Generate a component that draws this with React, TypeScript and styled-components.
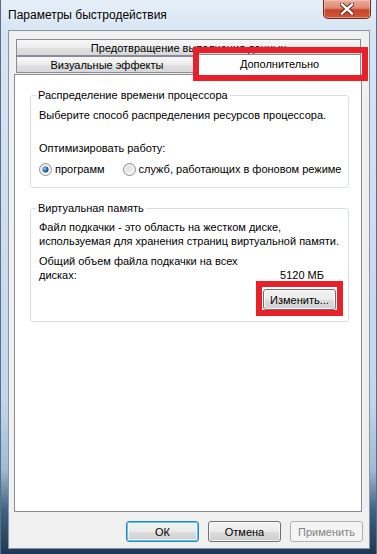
import { ReactNode } from "react";
import styled, { createGlobalStyle } from "styled-components";

//#region --- Page styles ---
const GlobalStyle = createGlobalStyle`
  html, body {
    margin: 0;
    padding: 0;
    background: #ffffff;
  }
  body {
    font-family: "Liberation Sans", "Noto Sans", "DejaVu Sans", sans-serif;
    font-size: 11px;
    color: #000000;
  }
`;

const Window = styled.div`
  position: relative;
  box-sizing: border-box;
  width: 377px;
  height: 554px;
  display: flex;
  flex-direction: column;
  border-left: 1px solid #5a6e85;
  border-right: 1px solid #5a6e85;
  background: linear-gradient(
    180deg,
    #e6eff8 0px,
    #d7e5f3 30px,
    #cddff0 200px,
    #c2d7ec 400px,
    #9fbad3 470px,
    #3f6283 510px,
    #1d3854 554px
  );
`;

const TitleBar = styled.div`
  height: 30px;
  display: flex;
  align-items: flex-start;
  justify-content: space-between;
  padding-left: 7px;
  flex-shrink: 0;
`;

const Title = styled.span`
  line-height: 30px;
  font-size: 12px;
  color: #000000;
  text-shadow: 0 0 6px rgba(255, 255, 255, 0.9);
`;

const CloseButton = styled.div`
  box-sizing: border-box;
  width: 48px;
  height: 19px;
  margin-right: 5px;
  display: flex;
  align-items: center;
  justify-content: center;
  border: 1px solid #6b2a1f;
  border-top: none;
  border-radius: 0 0 5px 5px;
  background: linear-gradient(
    180deg,
    #e9ab9a 0%,
    #de8a74 45%,
    #c8452b 55%,
    #d2553a 100%
  );
  box-shadow: inset 0 0 0 1px rgba(255, 220, 210, 0.45);
`;

const Client = styled.div`
  flex: 1;
  display: flex;
  flex-direction: column;
  margin: 0 6px 5px 7px;
  padding: 8px 7px 6px 5px;
  border: 1px solid #8796a8;
  background: #f0f0f0;
`;

const TabStrip = styled.div`
  display: flex;
  flex-direction: column;
`;

const TabRow = styled.div`
  display: flex;
  padding: 0 1px 0 2px;
`;

const Tab = styled.div<{ $width?: number; $selected?: boolean }>`
  position: relative;
  box-sizing: border-box;
  ${(p) => (p.$width ? `width: ${p.$width}px;` : "flex: 1;")}
  height: ${(p) => (p.$selected ? 21 : 17)}px;
  margin-top: ${(p) => (p.$selected ? -2 : 0)}px;
  margin-bottom: ${(p) => (p.$selected ? -1 : 0)}px;
  z-index: ${(p) => (p.$selected ? 2 : 1)};
  display: flex;
  align-items: center;
  justify-content: center;
  padding-bottom: ${(p) => (p.$selected ? 2 : 0)}px;
  border: 1px solid #898c95;
  border-bottom: ${(p) => (p.$selected ? "none" : "1px solid #898c95")};
  background: ${(p) =>
    p.$selected
      ? "#ffffff"
      : "linear-gradient(180deg, #f7f7f7 0%, #ededed 50%, #e0e0e0 51%, #d8d8d8 100%)"};
  white-space: nowrap;
`;

const Pane = styled.div`
  flex: 1;
  display: flex;
  flex-direction: column;
  gap: 13px;
  padding: 13px 12px 0 15px;
  border: 1px solid #898c95;
  background: #ffffff;
`;

const Group = styled.fieldset`
  margin: 0;
  padding: 0 12px 11px 8px;
  border: 1px solid #d5dfe5;
  border-radius: 3px;
  min-width: 0;
`;

const Legend = styled.legend`
  padding: 0 2px;
  margin-left: -3px;
  line-height: 15px;
`;

const Line = styled.div<{ $gap?: number }>`
  line-height: 14px;
  white-space: nowrap;
  margin-top: ${(p) => p.$gap ?? 0}px;
`;

const ValueRow = styled.div`
  display: flex;
  align-items: flex-end;
  justify-content: space-between;
  line-height: 14px;
  margin-top: 6px;
`;

const Value = styled.span`
  margin-right: 12px;
  white-space: nowrap;
`;

const RadioRow = styled.div`
  display: flex;
  align-items: center;
  gap: 18px;
  margin-top: 7px;
  line-height: 14px;
  white-space: nowrap;
`;

const RadioLabel = styled.label`
  display: flex;
  align-items: center;
  gap: 3px;
`;

const RightAlign = styled.div`
  display: flex;
  justify-content: flex-end;
  margin-top: 7px;
`;

const Marked = styled.div`
  position: relative;
  display: flex;
`;

const RedFrame = styled.div<{ $t: number; $r: number; $b: number; $l: number }>`
  position: absolute;
  top: ${(p) => -p.$t}px;
  right: ${(p) => -p.$r}px;
  bottom: ${(p) => -p.$b}px;
  left: ${(p) => -p.$l}px;
  border: 6px solid #e8202a;
  pointer-events: none;
  z-index: 5;
`;

const Button = styled.div<{ $default?: boolean; $disabled?: boolean }>`
  box-sizing: border-box;
  width: 73px;
  height: 21px;
  display: flex;
  align-items: center;
  justify-content: center;
  border-radius: 3px;
  border: 1px solid
    ${(p) => (p.$disabled ? "#adb2b5" : p.$default ? "#3c7fb1" : "#707070")};
  background: ${(p) =>
    p.$disabled
      ? "#f4f4f4"
      : "linear-gradient(180deg, #f2f2f2 0%, #ebebeb 50%, #dddddd 51%, #cfcfcf 100%)"};
  box-shadow: ${(p) =>
    p.$default
      ? "inset 0 0 0 1px #48d0f8, inset 0 0 0 2px rgba(255,255,255,0.6)"
      : p.$disabled
      ? "none"
      : "inset 0 0 0 1px rgba(255,255,255,0.7)"};
  color: ${(p) => (p.$disabled ? "#838383" : "#000000")};
`;

const ButtonRow = styled.div`
  display: flex;
  justify-content: flex-end;
  gap: 9px;
  margin-top: 9px;
  margin-right: -1px;
`;
//#endregion

const Radio = ({ checked }: { checked?: boolean }) => (
  <svg width="13" height="13" viewBox="0 0 13 13">
    <defs>
      <linearGradient id="rb" x1="0" y1="0" x2="1" y2="1">
        <stop offset="0" stopColor="#d9dada" />
        <stop offset="1" stopColor="#f6f6f6" />
      </linearGradient>
      <radialGradient id="rd" cx="0.35" cy="0.35" r="0.7">
        <stop offset="0" stopColor="#8ec4f2" />
        <stop offset="0.6" stopColor="#2a6fb8" />
        <stop offset="1" stopColor="#0d3f76" />
      </radialGradient>
    </defs>
    <circle cx="6.5" cy="6.5" r="6" fill="url(#rb)" stroke="#8e8f8f" />
    <circle cx="6.5" cy="6.5" r="4.6" fill="none" stroke="#ffffff" strokeOpacity="0.6" />
    {checked && <circle cx="6.5" cy="6.5" r="3" fill="url(#rd)" />}
  </svg>
);

const CloseGlyph = () => (
  <svg width="14" height="12" viewBox="0 0 14 12">
    <path
      d="M2 1.5 L12 10.5 M12 1.5 L2 10.5"
      stroke="#4a1a12"
      strokeWidth="4.2"
      strokeLinecap="square"
    />
    <path
      d="M2 1.5 L12 10.5 M12 1.5 L2 10.5"
      stroke="#ffffff"
      strokeWidth="2.4"
      strokeLinecap="square"
    />
  </svg>
);

const Section = ({ title, children }: { title: string; children: ReactNode }) => (
  <Group>
    <Legend>{title}</Legend>
    {children}
  </Group>
);

const App = () => {
  return (
    <>
      <GlobalStyle />
      <Window>
        <TitleBar>
          <Title>Параметры быстродействия</Title>
          <CloseButton>
            <CloseGlyph />
          </CloseButton>
        </TitleBar>
        <Client>
          <TabStrip>
            <TabRow>
              <Tab>Предотвращение выполнения данных</Tab>
            </TabRow>
            <TabRow>
              <Tab $width={182}>Визуальные эффекты</Tab>
              <Tab $width={163} $selected>
                Дополнительно
                <RedFrame $t={8} $r={8} $b={6} $l={6} />
              </Tab>
            </TabRow>
          </TabStrip>
          <Pane>
            <Section title="Распределение времени процессора">
              <Line $gap={5}>Выберите способ распределения ресурсов процессора.</Line>
              <Line $gap={19}>Оптимизировать работу:</Line>
              <RadioRow>
                <RadioLabel>
                  <Radio checked />
                  программ
                </RadioLabel>
                <RadioLabel>
                  <Radio />
                  служб, работающих в фоновом режиме
                </RadioLabel>
              </RadioRow>
            </Section>
            <Section title="Виртуальная память">
              <Line $gap={4}>Файл подкачки - это область на жестком диске,</Line>
              <Line>используемая для хранения страниц виртуальной памяти.</Line>
              <ValueRow>
                <span>
                  Общий объем файла подкачки на всех
                  <br />
                  дисках:
                </span>
                <Value>5120 МБ</Value>
              </ValueRow>
              <RightAlign>
                <Marked>
                  <Button>Изменить...</Button>
                  <RedFrame $t={8} $r={7} $b={6} $l={7} />
                </Marked>
              </RightAlign>
            </Section>
          </Pane>
          <ButtonRow>
            <Button $default>ОК</Button>
            <Button>Отмена</Button>
            <Button $disabled>Применить</Button>
          </ButtonRow>
        </Client>
      </Window>
    </>
  );
};

export default App;
